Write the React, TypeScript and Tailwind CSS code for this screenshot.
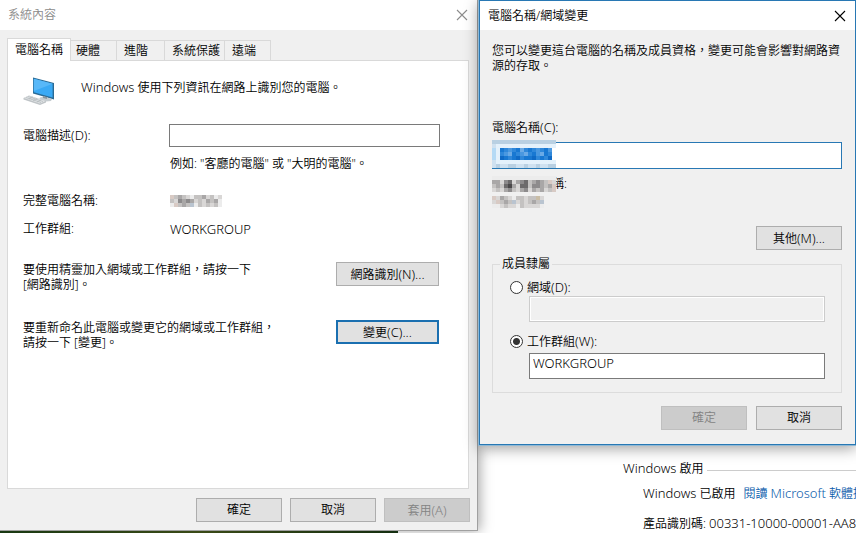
import React from 'react';

const En: React.FC<{ children: React.ReactNode }> = ({ children }) => <span className="text-[13px]">{children}</span>;

interface WinButtonProps {
  children: React.ReactNode;
  wide?: boolean;
  focused?: boolean;
  disabled?: boolean;
}

const WinButton: React.FC<WinButtonProps> = ({ children, wide, focused, disabled }) => (
  <button
    type="button"
    disabled={disabled}
    className={`h-6 shrink-0 leading-none whitespace-nowrap ${wide ? 'w-[103px]' : 'w-[86px]'} ${
      disabled
        ? 'border border-[#bfbfbf] bg-[#cccccc] text-[#838383]'
        : focused
          ? 'border-2 border-[#1a6fb0] bg-[#e1e1e1]'
          : 'border border-[#adadad] bg-[#e1e1e1]'
    }`}
  >
    {children}
  </button>
);

interface MosaicProps {
  rows: string[];
  palette: Record<string, string>;
  className?: string;
}

// One character per 4px block; a dot leaves the block empty
const Mosaic: React.FC<MosaicProps> = ({ rows, palette, className }) => (
  <svg
    width={rows[0].length * 4}
    height={rows.length * 4}
    shapeRendering="crispEdges"
    aria-hidden="true"
    className={className}
  >
    {rows.map((row, y) =>
      row.split('').map((c, x) => (c === '.' ? null : <rect key={`${x}-${y}`} x={x * 4} y={y * 4} width="4" height="4" fill={palette[c]} />))
    )}
  </svg>
);

const greys = {
  a: '#ececec',
  b: '#d9d7d6',
  c: '#c4c2c1',
  d: '#a9a7a7',
  e: '#8d8b8c',
  f: '#6c6a6b',
  g: '#4b494a',
  p: '#d8cac4',
  q: '#b9c4d0',
  y: '#c9bda6',
};

const blues = {
  l: '#b9d0e2',
  m: '#cfe1f0',
  w: '#e4f1fb',
  n: '#b5daf5',
  a: '#1878d2',
  b: '#2f88da',
  c: '#4a98e0',
  d: '#6aaae6',
  e: '#0f6ac6',
};

const CloseIcon = () => (
  <svg width="12" height="12" viewBox="0 0 12 12" fill="none" stroke="currentColor" strokeWidth="1.1" aria-hidden="true">
    <path d="M1 1l10 10M11 1L1 11" />
  </svg>
);

const ComputerIcon = () => (
  <svg width="32" height="29" viewBox="0 0 32 29" aria-hidden="true">
    <path d="M10 0.5L31 6v16.5L10 16.500z" fill="#2a6a94" />
    <path d="M10.800 1.800L29.600 6.800v13.600L10.800 15.200z" fill="#3aa9f4" />
    <path d="M10.800 1.800L29.600 6.800L10.800 14z" fill="#58b8f8" />
    <path d="M17 20.500l4-1 8 2.500-1 2-5 0.500-7-2z" fill="#c5ccd0" />
    <path d="M20 19l4 1v2l-4-1z" fill="#8b969d" />
    <path d="M0.500 21L6 18.500L23 24v1.500L17 28L0.500 22.500z" fill="#bfc4c7" />
    <path d="M1 21L6 19L22.500 24L17 26.500z" fill="#e3e6e8" />
    <path d="M3 20.500l15 5M5 19.500l15 5M6 22l4-2M10 23.500l4-2M14 25l4-2" stroke="#b4babd" strokeWidth="0.800" fill="none" />
  </svg>
);

const tabs = [
  { name: '硬體', style: 'w-[46px] pl-[5px]' },
  { name: '進階', style: 'w-12 pl-[7px]' },
  { name: '系統保護', style: 'w-[60px] pl-[7px]' },
  { name: '遠端', style: 'w-[46px] pl-[7px]' },
];

const SystemProperties = () => (
  <section className="flex flex-1 flex-col border-r border-b border-[#a0a0a0] bg-[#f0f0f0]" aria-label="系統內容">
    <header className="flex h-[30px] items-center justify-between bg-white pr-[9px] pl-2 text-[#8c8c8c]">
      <h1>系統內容</h1>
      <button type="button" aria-label="關閉">
        <CloseIcon />
      </button>
    </header>

    <div className="flex items-end px-[7px] pt-2" role="tablist">
      <button
        type="button"
        role="tab"
        aria-selected="true"
        className="relative z-10 -mb-px h-[23px] w-16 border border-b-0 border-[#d9d9d9] bg-white pb-px"
      >
        電腦名稱
      </button>
      {tabs.map((tab) => (
        <button
          key={tab.name}
          type="button"
          role="tab"
          aria-selected="false"
          className={`h-5 border-t border-r border-[#d9d9d9] text-left whitespace-nowrap ${tab.style}`}
        >
          {tab.name}
        </button>
      ))}
    </div>

    <div className="mr-2 ml-[7px] flex-1 border border-[#d9d9d9] bg-white pt-4 pr-7 pl-[15px]" role="tabpanel">
      <div className="flex gap-[26px]">
        <ComputerIcon />
        <p className="leading-5">
          <En>Windows</En> 使用下列資訊在網路上識別您的電腦。
        </p>
      </div>
      <div className="mt-[18px] grid grid-cols-[146px_1fr] items-center">
        <label htmlFor="description">
          電腦描述<En>(D):</En>
        </label>
        <input id="description" type="text" className="h-[23px] w-full border border-[#7a7a7a] bg-white px-1" />
        <p className="col-start-2 mt-[9px] pl-px">例如: "客廳的電腦" 或 "大明的電腦"。</p>
      </div>
      <dl className="mt-[21px] grid grid-cols-[147px_1fr] gap-y-3">
        <dt>完整電腦名稱:</dt>
        <dd className="flex items-center">
          <Mosaic palette={greys} rows={['pcdcbaccdbcab', 'cbededbcbdcda', 'apcdcqacbcbca']} />
        </dd>
        <dt>工作群組:</dt>
        <dd>
          <En>WORKGROUP</En>
        </dd>
      </dl>
      <div className="mt-6 flex items-start justify-between pr-px">
        <p className="leading-[15px]">
          要使用精靈加入網域或工作群組，請按一下
          <br />
          [網路識別]。
        </p>
        <WinButton wide>
          網路識別<En>(N)...</En>
        </WinButton>
      </div>
      <div className="mt-7 flex items-start justify-between pr-px">
        <p className="leading-[15px]">
          要重新命名此電腦或變更它的網域或工作群組，
          <br />
          請按一下 [變更]。
        </p>
        <WinButton wide focused>
          變更<En>(C)...</En>
        </WinButton>
      </div>
    </div>

    <footer className="flex justify-end gap-2 px-[7px] pt-[9px] pb-2">
      <WinButton>確定</WinButton>
      <WinButton>取消</WinButton>
      <WinButton disabled>
        套用<En>(A)</En>
      </WinButton>
    </footer>
  </section>
);

const radioStyle =
  'h-[13px] w-[13px] appearance-none rounded-full border border-[#333333] bg-white checked:border-[#333333] checked:bg-[radial-gradient(circle,#333333_0_3px,#ffffff_4px)]';

const NameChangeDialog = () => (
  <section
    className="relative z-20 border border-[#2878b4] bg-[#f0f0f0] shadow-[0_0_0_1px_#8fb8d4,0_3px_14px_rgba(0,0,0,0.4)]"
    role="dialog"
    aria-label="電腦名稱/網域變更"
  >
    <header className="flex h-[29px] items-center justify-between bg-white pr-[9px] pl-2">
      <h2>電腦名稱/網域變更</h2>
      <button type="button" aria-label="關閉">
        <CloseIcon />
      </button>
    </header>

    <form className="pt-[13px] pr-[13px] pb-3.5 pl-3">
      <p className="leading-[15px]">您可以變更這台電腦的名稱及成員資格，變更可能會影響對網路資源的存取。</p>
      <label htmlFor="computer-name" className="mt-[46px] block">
        電腦名稱<En>(C):</En>
      </label>
      <div className="relative mt-1.5">
        <input id="computer-name" type="text" className="block h-[27px] w-full border border-[#2878b4] bg-white px-1" />
        <Mosaic
          className="absolute -top-0.5 left-0"
          palette={blues}
          rows={[
            'llllllllllllllll',
            'mwwwwwwwwwwwwwww',
            'nwabcbadbabcbac.',
            'nwbcdabcdbacdab.',
            'nweabaebaaebabe.',
            'mwwwwwwwwwwwwwww',
            'mlmmllmmlmmlmmll',
          ]}
        />
      </div>
      <p className="relative mt-[7px]">
        完整電腦名稱:
        <Mosaic
          className="absolute top-0 left-0"
          palette={greys}
          rows={['aaaaaaaaaaaaaaaa', 'ddbefbdefcdedcpb', 'cdcfgdbffceedcdp', 'bcbdecbdebdcdbcp']}
        />
      </p>
      <p className="flex h-5 items-center">
        <Mosaic palette={greys} rows={['pbdcbaccbccyb', 'bpcdcqbcbcdcq', 'aabcbbacbbbba']} />
      </p>
      <div className="mt-3.5 flex justify-end">
        <WinButton>
          其他<En>(M)...</En>
        </WinButton>
      </div>

      <fieldset className="mt-1.5 border border-[#dcdcdc] pr-4 pb-[13px] pl-[17px]">
        <legend className="-ml-2.5 px-0.5">成員隸屬</legend>
        <div className="mt-[7px] flex items-center gap-1">
          <input id="domain" type="radio" name="member" className={radioStyle} />
          <label htmlFor="domain">
            網域<En>(D):</En>
          </label>
        </div>
        <div className="pl-[19px]">
          <input
            type="text"
            disabled
            aria-label="網域名稱"
            className="block h-[26px] w-full border border-[#cccccc] bg-[#f0f0f0] px-1 shadow-[inset_0_0_0_1px_#ffffff]"
          />
        </div>
        <div className="mt-[11px] flex items-center gap-1">
          <input id="workgroup" type="radio" name="member" defaultChecked className={radioStyle} />
          <label htmlFor="workgroup">
            工作群組<En>(W):</En>
          </label>
        </div>
        <div className="mt-[3px] pl-[19px]">
          <input
            type="text"
            aria-label="工作群組名稱"
            defaultValue="WORKGROUP"
            className="block h-[26px] w-full border border-[#7a7a7a] bg-white px-[3px] pb-[7px] text-[13px]"
          />
        </div>
      </fieldset>

      <div className="mt-[13px] flex justify-end gap-[9px]">
        <WinButton disabled>確定</WinButton>
        <WinButton>取消</WinButton>
      </div>
    </form>
  </section>
);

const ActivationInfo = () => (
  <section className="flex-1 pt-[15px] pl-36 whitespace-nowrap">
    <div className="flex items-center gap-1">
      <h2>
        <En>Windows</En> 啟用
      </h2>
      <hr className="mt-1 flex-1 border-[#cccccc]" />
    </div>
    <p className="mt-2 flex gap-2 pl-5">
      <span>
        <En>Windows</En> 已啟用
      </span>
      <a href="#license" className="text-[#0a5cab]">
        閱讀 <En>Microsoft</En> 軟體授權條款
      </a>
    </p>
    <p className="mt-[13px] pl-5">
      產品識別碼: <En>00331-10000-00001-AA84</En>
    </p>
  </section>
);

export default function App() {
  return (
    <main className="grid min-h-screen grid-cols-[479fr_377fr] overflow-hidden bg-white font-['Noto_Sans','Noto_Sans_CJK_TC',sans-serif] text-[12px] leading-4 font-[350] text-black">
      <div className="relative z-10 flex min-w-0 flex-col pr-px">
        <div className="flex flex-1 flex-col shadow-[2px_0_12px_rgba(0,0,0,0.35)]">
          <SystemProperties />
        </div>
        <div className="relative h-0.5 w-5/6 bg-linear-to-r from-[#183812] via-[#3a4a16] to-[#142e10]" />
      </div>
      <div className="relative z-20 flex min-w-0 flex-col">
        <NameChangeDialog />
        <ActivationInfo />
      </div>
    </main>
  );
}
